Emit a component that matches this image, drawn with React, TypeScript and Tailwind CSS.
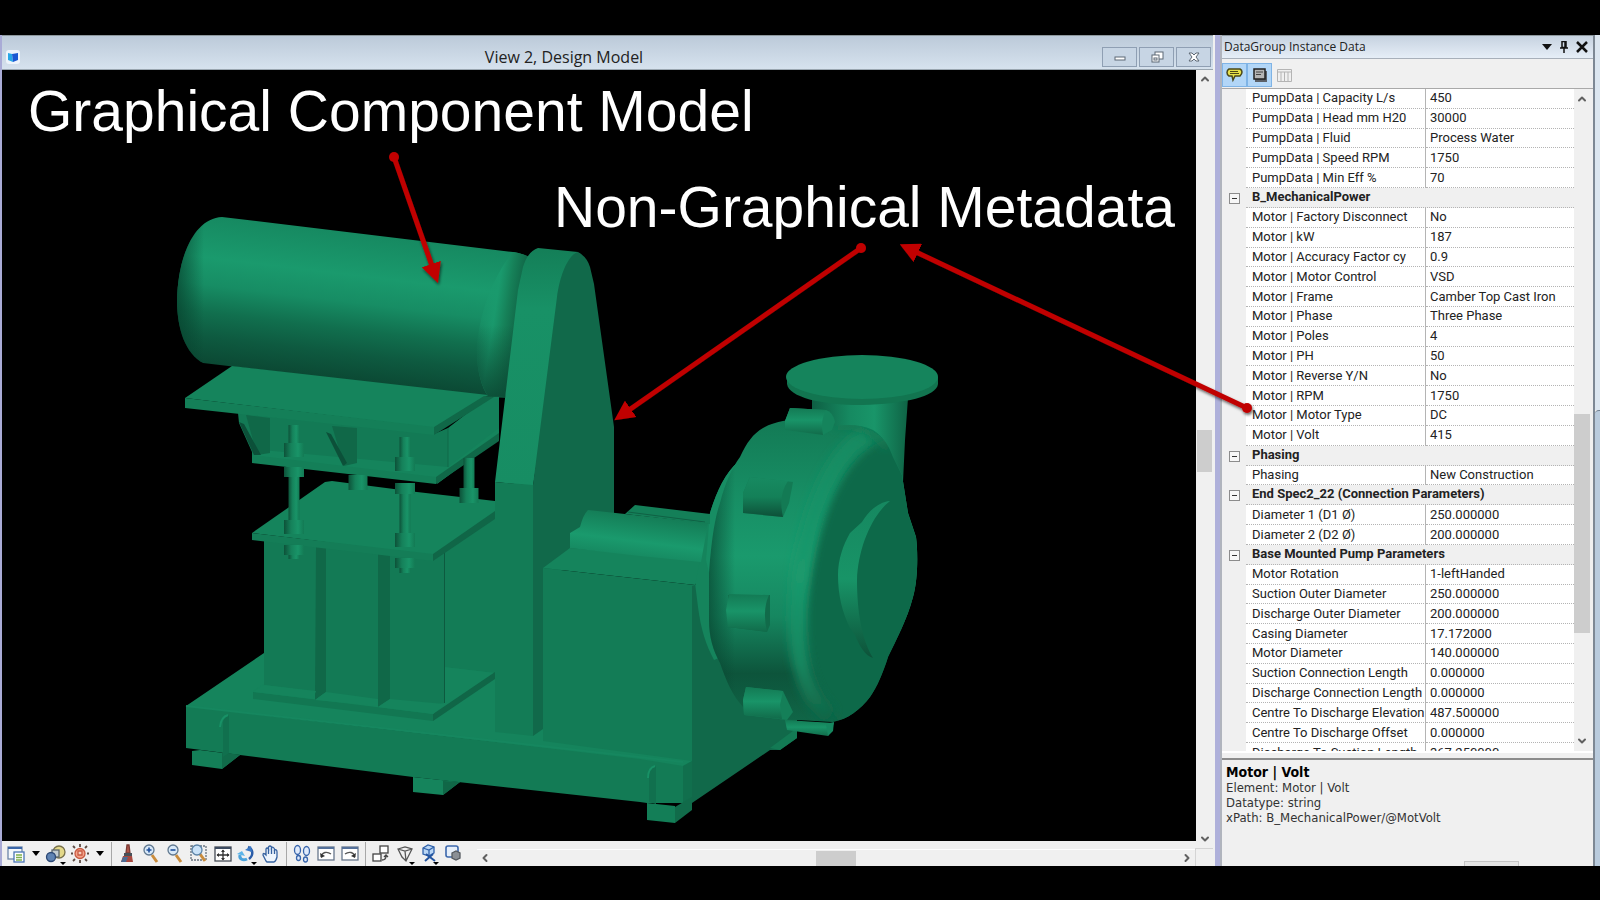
import type { ReactNode } from "react";
import { ChevronDown, ChevronLeft, ChevronRight, ChevronUp } from "lucide-react";

type Row = [string, string];
type Group = { title?: string; rows: Row[] };

const groups: Group[] = [
  {
    rows: [
      ["PumpData | Capacity L/s", "450"],
      ["PumpData | Head mm H20", "30000"],
      ["PumpData | Fluid", "Process Water"],
      ["PumpData | Speed RPM", "1750"],
      ["PumpData | Min Eff %", "70"],
    ],
  },
  {
    title: "B_MechanicalPower",
    rows: [
      ["Motor | Factory Disconnect", "No"],
      ["Motor | kW", "187"],
      ["Motor | Accuracy Factor cy", "0.9"],
      ["Motor | Motor Control", "VSD"],
      ["Motor | Frame", "Camber Top Cast Iron"],
      ["Motor | Phase", "Three Phase"],
      ["Motor | Poles", "4"],
      ["Motor | PH", "50"],
      ["Motor | Reverse Y/N", "No"],
      ["Motor | RPM", "1750"],
      ["Motor | Motor Type", "DC"],
      ["Motor | Volt", "415"],
    ],
  },
  { title: "Phasing", rows: [["Phasing", "New Construction"]] },
  {
    title: "End Spec2_22 (Connection Parameters)",
    rows: [
      ["Diameter 1 (D1 Ø)", "250.000000"],
      ["Diameter 2 (D2 Ø)", "200.000000"],
    ],
  },
  {
    title: "Base Mounted Pump Parameters",
    rows: [
      ["Motor Rotation", "1-leftHanded"],
      ["Suction Outer Diameter", "250.000000"],
      ["Discharge Outer Diameter", "200.000000"],
      ["Casing Diameter", "17.172000"],
      ["Motor Diameter", "140.000000"],
      ["Suction Connection Length", "0.000000"],
      ["Discharge Connection Length", "0.000000"],
      ["Centre To Discharge Elevation", "487.500000"],
      ["Centre To Discharge Offset", "0.000000"],
      ["Discharge To Suction Length", "367.250000"],
    ],
  },
];

function Rod({ x, top, bottom, w = 11 }: { x: number; top: number; bottom: number; w?: number }) {
  return <rect x={x - w / 2} y={top} width={w} height={bottom - top} fill="url(#rod)" />;
}

function PumpModel() {
  return (
    <g>
      <defs>
        <linearGradient id="drum" gradientUnits="userSpaceOnUse" x1="358" y1="230" x2="340" y2="380">
          <stop offset="0" stopColor="#168860" />
          <stop offset=".3" stopColor="#1a9a6d" />
          <stop offset=".48" stopColor="#178d64" />
          <stop offset=".66" stopColor="#116f4e" />
          <stop offset=".82" stopColor="#0e5a40" />
          <stop offset="1" stopColor="#0b4833" />
        </linearGradient>
        <linearGradient id="drumLeft" gradientUnits="userSpaceOnUse" x1="177" y1="0" x2="204" y2="0">
          <stop offset="0" stopColor="#06402c" stopOpacity=".7" />
          <stop offset="1" stopColor="#06402c" stopOpacity="0" />
        </linearGradient>
        <linearGradient id="drumCap" gradientUnits="userSpaceOnUse" x1="474" y1="310" x2="520" y2="317">
          <stop offset="0" stopColor="#1a9a6d" stopOpacity="0" />
          <stop offset=".45" stopColor="#1a9a6d" stopOpacity=".9" />
          <stop offset=".7" stopColor="#168058" />
          <stop offset="1" stopColor="#106345" />
        </linearGradient>
        <linearGradient id="drumCapShade" gradientUnits="userSpaceOnUse" x1="0" y1="325" x2="0" y2="396">
          <stop offset="0" stopColor="#0b4833" stopOpacity="0" />
          <stop offset="1" stopColor="#0b4833" stopOpacity=".85" />
        </linearGradient>
        <linearGradient id="rod" x1="0" x2="1" y1="0" y2="0">
          <stop offset="0" stopColor="#0d5239" />
          <stop offset=".35" stopColor="#15815a" />
          <stop offset=".7" stopColor="#199468" />
          <stop offset="1" stopColor="#137a54" />
        </linearGradient>
        <linearGradient id="neck" x1="0" x2="1" y1="0" y2="0">
          <stop offset="0" stopColor="#0e5f43" />
          <stop offset=".4" stopColor="#168a61" />
          <stop offset=".65" stopColor="#199569" />
          <stop offset="1" stopColor="#0f6345" />
        </linearGradient>
        <linearGradient id="shaft" gradientUnits="userSpaceOnUse" x1="640" y1="510" x2="634" y2="558">
          <stop offset="0" stopColor="#137752" />
          <stop offset=".65" stopColor="#1a9a6d" />
          <stop offset="1" stopColor="#168860" />
        </linearGradient>
        <linearGradient id="volute" gradientUnits="userSpaceOnUse" x1="0" y1="420" x2="0" y2="722">
          <stop offset="0" stopColor="#137a55" />
          <stop offset=".25" stopColor="#178e64" />
          <stop offset=".45" stopColor="#1a9a6d" />
          <stop offset=".65" stopColor="#168760" />
          <stop offset=".84" stopColor="#0d543b" />
          <stop offset="1" stopColor="#106647" />
        </linearGradient>
        <linearGradient id="voluteEdge" gradientUnits="userSpaceOnUse" x1="708" y1="0" x2="735" y2="0">
          <stop offset="0" stopColor="#07422e" stopOpacity=".7" />
          <stop offset="1" stopColor="#07422e" stopOpacity="0" />
        </linearGradient>
        <linearGradient id="rim" gradientUnits="userSpaceOnUse" x1="0" y1="430" x2="0" y2="720">
          <stop offset="0" stopColor="#178a61" />
          <stop offset=".5" stopColor="#1a9a6d" />
          <stop offset=".8" stopColor="#168760" />
          <stop offset="1" stopColor="#106647" />
        </linearGradient>
        <linearGradient id="lug" x1="0" x2="0" y1="0" y2="1">
          <stop offset="0" stopColor="#137a54" />
          <stop offset=".45" stopColor="#199468" />
          <stop offset="1" stopColor="#116b4a" />
        </linearGradient>
        <linearGradient id="lugDark" x1="0" x2="0" y1="0" y2="1">
          <stop offset="0" stopColor="#178a61" />
          <stop offset=".5" stopColor="#148058" />
          <stop offset="1" stopColor="#0d5038" />
        </linearGradient>
        <linearGradient id="hub" gradientUnits="userSpaceOnUse" x1="0" y1="500" x2="0" y2="658">
          <stop offset="0" stopColor="#168860" />
          <stop offset=".5" stopColor="#189467" />
          <stop offset="1" stopColor="#0d5239" />
        </linearGradient>
        <linearGradient id="guard" gradientUnits="userSpaceOnUse" x1="0" y1="250" x2="0" y2="485">
          <stop offset="0" stopColor="#147f58" />
          <stop offset=".25" stopColor="#189166" />
          <stop offset="1" stopColor="#178d63" />
        </linearGradient>
        <filter id="soft" x="-20%" y="-20%" width="140%" height="140%">
          <feGaussianBlur stdDeviation="4" />
        </filter>
        <clipPath id="voluteClip">
          <path d="M783 421C800 416 820 424 835 426C850 424 862 425 873 430C883 436 889 446 893 457L902 475L908 513L916 537C918 552 918 580 913 597C907 620 896 640 888 657C883 673 877 687 870 697C860 710 848 719 833 722L797 720C777 719 757 718 743 707C732 695 726 680 720 663C713 650 709 637 709 620L709 573C711 545 714 520 720 503C725 483 732 468 740 457C747 442 753 434 763 428C770 424 777 422 783 421Z" />
        </clipPath>
      </defs>

      {/* skid base */}
      <path d="M186 706L264 653H495L797 735L692 770L640 760Z" fill="#15845c" />
      <path d="M186 706L640 759L683 766L692 761V803L647 803L640 802L413 777L240 755L186 748Z" fill="#137b55" />
      <path d="M186 706L683 762" stroke="#16875f" strokeWidth="2" />
      <path d="M192 751L200 750L240 755L222 769L192 765Z" fill="#147f58" />
      <path d="M222 752L240 755L222 769Z" fill="#116b4a" />
      <path d="M223 724Q223 717 229 715V753L223 757Z" fill="#11704e" />
      <path d="M220 727Q221 717 228 715" stroke="#189166" strokeWidth="2" fill="none" />
      <path d="M413 777L460 782L443 795L413 792Z" fill="#15845c" />
      <path d="M443 781L460 782L443 795Z" fill="#106747" />

      {/* right-hand side wall */}
      <path d="M692 585H700L797 700V738L780 750H770L692 803Z" fill="#11694a" />
      <path d="M770 748L797 728V738L780 750Z" fill="#137a54" />
      <path d="M683 766L692 761V802L683 807Z" fill="#116f4d" />
      <path d="M647 803L675 806L675 823L647 820Z" fill="#137e57" />
      <path d="M675 807L692 797V810L675 823Z" fill="#116b4a" />
      <path d="M649 775Q649 768 656 766V804L649 802Z" fill="#11704e" />
      <path d="M648 778Q648 768 655 766" stroke="#189166" strokeWidth="2" fill="none" />

      {/* pedestal */}
      <path d="M444 540L495 510V673L444 667Z" fill="#137c56" />
      <path d="M253 691L264 684L444 667L495 673L433 715Z" fill="#15845c" />
      <path d="M253 692L433 714V721L253 699Z" fill="#127752" />
      <path d="M433 714L495 672V679L433 721Z" fill="#106647" />
      <path d="M264 538L444 548V703L428 706L264 685Z" fill="#137a55" />
      <path d="M316 546H326V692L315 700Z" fill="#106848" />
      <path d="M378 553H390V699L378 707Z" fill="#106848" />
      <path d="M326 692L378 699V706L315 700Z" fill="#15845c" />
      <path d="M390 699L444 704L433 714L378 707Z" fill="#15845c" />
      <path d="M264 685L316 691L313 699L253 692Z" fill="#15845c" />
      <path d="M444.500 550V703" stroke="#0d5a3f" strokeWidth="1" />
      <path d="M252 533L325 482L332 481L417 492L495 501V512L433 555Z" fill="#15845c" />
      <path d="M252 533L433 554V561L252 540Z" fill="#147d57" />
      <path d="M433 554L495 511V519L433 561Z" fill="#106647" />

      {/* drum */}
      <g>
        <path d="M222 217L513 252Q525 254 530 258L505 398L488 397L203 363C186 354 177 330 177 300C178 255 195 218 222 217Z" fill="url(#drum)" />
        <path d="M222 217L230 218L215 364L203 363C186 354 177 330 177 300C178 255 195 218 222 217Z" fill="url(#drumLeft)" />
        <path d="M513 252C494 275 480 310 477 345C476 370 482 388 488 396L505 397L530 258Q525 254 513 252Z" fill="url(#drumCap)" />
        <path d="M513 252C494 275 480 310 477 345C476 370 482 388 488 396L505 397L530 258Q525 254 513 252Z" fill="url(#drumCapShade)" />
      </g>

      {/* support frame below the drum */}
      <path d="M448 428L488 397L499 397V438L437 484Z" fill="#14805a" />
      <path d="M238 413L434 434L448 428V468L252 456V452L239 423Z" fill="#137a55" />
      <path d="M252 456L262 450L448 467L499 428V436L436 478Z" fill="#15845c" />
      <path d="M448 428V467" stroke="#106848" strokeWidth="1" />
      <path d="M252 455L436 477V484L252 463Z" fill="#147f58" />
      <path d="M436 477L499 433V441L436 484Z" fill="#106848" />
      <path d="M246 415L270 418V453L257 455Z" fill="#106848" />
      <path d="M239 422L244 424L261 455H254Z" fill="#0c5039" />
      <path d="M332 426L357 428V463L344 466Z" fill="#106848" />
      <path d="M326 432L331 434L347 463L343 466Z" fill="#0c5039" />
      <path d="M185 398L232 366L488 395L434 428Z" fill="#15845c" />
      <path d="M185 398L434 427V435L185 408Z" fill="#147f58" />
      <path d="M434 427L484 396L494 397L434 435Z" fill="#106848" />

      {/* threaded rods and nuts */}
      <Rod x={294} top={425} bottom={445} />
      <Rod x={294} top={443} bottom={457} w={20} />
      <Rod x={294} top={467} bottom={477} w={20} />
      <Rod x={294} top={477} bottom={521} />
      <Rod x={294} top={520} bottom={534} w={20} />
      <Rod x={294} top={545} bottom={555} w={20} />
      <Rod x={294} top={555} bottom={559} />
      <Rod x={405} top={437} bottom={458} />
      <Rod x={405} top={457} bottom={471} w={20} />
      <Rod x={405} top={483} bottom={494} w={20} />
      <Rod x={405} top={494} bottom={534} />
      <Rod x={405} top={533} bottom={547} w={20} />
      <Rod x={405} top={558} bottom={568} w={20} />
      <Rod x={405} top={568} bottom={573} />
      <Rod x={358} top={475} bottom={490} w={19} />
      <Rod x={469} top={458} bottom={488} />
      <Rod x={469} top={488} bottom={503} w={19} />

      {/* belt guard */}
      <path d="M495 482L518 290L523 267Q528 251 538 248L578 252L562 300L533 486Z" fill="url(#guard)" />
      <path d="M495 482L533 485V736L495 732Z" fill="#137c56" />
      <path d="M578 252Q587 257 590 267L594 284L614 427V570H543V729L533 736V485L557 297C560 275 568 255 578 252Z" fill="#11694a" />

      {/* pump back plate */}
      <path d="M738 462C725 473 716 493 710 513L700 550L694 575L698 607C701 630 706 645 714 660L740 650V462Z" fill="#15845c" />
      <path d="M738 462C725 473 716 493 710 513L706 560L709 573L722 503Z" fill="#178d63" />

      {/* bearing block and shaft */}
      <path d="M543 568L570 548L700 560L695 585Z" fill="#15845c" />
      <path d="M543 568L695 585L692 586V761L543 741Z" fill="#137c56" />
      <path d="M625 514L635 505L710 514V524Z" fill="#147f58" />
      <path d="M628 512L705 522" stroke="#0f6144" strokeWidth="1" />
      <path d="M588 510L708 523L701 562L640 556L570 548V533L580 527Q583 515 588 510Z" fill="url(#shaft)" />

      {/* discharge neck and flange */}
      <path d="M812 398H908L905 440L903 482L880 470L812 430Z" fill="url(#neck)" />
      <path d="M787 377V384C789 397 820 405 862 405C905 404 937 396 938 384V377Z" fill="#127550" />
      <ellipse cx="862" cy="377" rx="76" ry="22" fill="#15845c" />

      {/* pump casing */}
      <g clipPath="url(#voluteClip)">
        <rect x="700" y="410" width="225" height="320" fill="url(#volute)" />
        <rect x="700" y="410" width="40" height="320" fill="url(#voluteEdge)" />
        <path d="M885 440C840 455 812 530 806 610C804 665 822 705 848 730L940 740V430Z" fill="#11694a" filter="url(#soft)" />
        <path d="M868 436C830 450 801 530 797 610C795 665 809 700 830 716" stroke="url(#rim)" strokeWidth="17" fill="none" filter="url(#soft)" />
        <path d="M835 427C855 424 875 432 888 450" stroke="#137b55" strokeWidth="4" fill="none" filter="url(#soft)" />
      </g>
      <path d="M890 501C878 502 868 512 862 522L850 533C843 545 838 560 838 575C838 595 842 612 850 628L855 635C859 645 865 656 873 658C862 640 857 612 857 580C858 548 872 515 890 501Z" fill="url(#hub)" />

      {/* casing lugs */}
      <path d="M785 430V421L790 408L826 410Q833 412 835 422L832 430L823 435Z" fill="#15845c" />
      <path d="M785 430V421L790 408L826 410Q820 420 823 435Z" fill="url(#lug)" />
      <path d="M743 513V493L750 477L793 482L789 503L783 517Z" fill="#137a54" />
      <path d="M743 513V493L750 477L788 481Q778 495 783 517Z" fill="url(#lugDark)" />
      <path d="M728 627V595L770 595V625L767 632Z" fill="#116b4a" />
      <path d="M728 627L726 610L729 594L769 595Q762 610 767 632Z" fill="url(#lug)" />
      <path d="M744 715L743 700L746 687L783 691L793 712L787 720Z" fill="#147f58" />
      <path d="M744 715L743 700L746 687L783 691L780 705L782 719Z" fill="url(#lug)" />
      <path d="M785 720L834 723L828 736L787 730Z" fill="url(#lug)" />
      <path d="M826 724L834 722L833 731L828 736Z" fill="#168860" />
    </g>
  );
}

const ink = "#c00000";

function Callouts() {
  return (
    <g stroke={ink} strokeWidth="5" fill={ink} filter="url(#calloutShadow)">
      <defs>
        <filter id="calloutShadow" filterUnits="userSpaceOnUse" x="300" y="100" width="1000" height="400">
          <feDropShadow dx="1" dy="2" stdDeviation="1.500" floodColor="#000" floodOpacity=".6" />
        </filter>
        <marker id="head" markerUnits="userSpaceOnUse" markerWidth="20" markerHeight="20" refX="2" refY="10" orient="auto">
          <path d="M0 0L20 10L0 20Z" fill={ink} stroke="none" />
        </marker>
      </defs>
      <path d="M394 157L432 266" markerEnd="url(#head)" />
      <path d="M861 248L629 410" markerEnd="url(#head)" />
      <path d="M1247 408L916 252" markerEnd="url(#head)" />
      <circle cx="394" cy="157" r="5" stroke="none" />
      <circle cx="861" cy="248" r="5" stroke="none" />
      <circle cx="1247" cy="408" r="5" stroke="none" />
    </g>
  );
}

function WindowButton({ label, children }: { label: string; children: ReactNode }) {
  return (
    <button aria-label={label} className="flex h-5 w-[35px] items-center justify-center border border-[#8f9fb3] bg-[#c7d5e4]">
      <svg width="14" height="12" viewBox="0 0 14 12" fill="none" stroke="#5d6874" strokeWidth="1">
        {children}
      </svg>
    </button>
  );
}

function Tool({ label, menu, children }: { label: string; menu?: boolean; children: ReactNode }) {
  return (
    <button aria-label={label} className="flex h-6 w-6 shrink-0 items-center justify-center">
      <svg width="22" height="24" viewBox="0 0 22 24" fill="none" strokeWidth="1.300">
        {children}
        {menu && <path d="M15 20H21L18 23Z" fill="#000" />}
      </svg>
    </button>
  );
}

function Caret({ label }: { label: string }) {
  return (
    <button aria-label={label} className="flex h-6 w-4 shrink-0 items-center justify-center">
      <svg width="8" height="5" viewBox="0 0 8 5">
        <path d="M0 0H8L4 5Z" fill="#000" />
      </svg>
    </button>
  );
}

function Divider() {
  return <span className="mx-[3px] h-6 w-px shrink-0 bg-[#a8a8a8]" />;
}

function ViewToolbar() {
  return (
    <div className="flex shrink-0 items-center pl-[2px]">
      <Tool label="View attributes">
        <rect x="3" y="5" width="14" height="12" fill="#f4f8fc" stroke="#6d86a8" />
        <path d="M3 6H17" stroke="#3a66a8" strokeWidth="2" />
        <rect x="9" y="10" width="10" height="10" fill="#fff" stroke="#4a76b4" />
        <path d="M11 13H17M11 15.500H17M11 18H17" stroke="#7db04a" />
      </Tool>
      <Caret label="View attributes menu" />
      <Tool label="Display style" menu>
        <circle cx="14" cy="10" r="6" fill="#e3d889" stroke="#77704a" />
        <rect x="7" y="8" width="7" height="7" fill="#c3ccd0" stroke="#59646b" />
        <circle cx="6" cy="15" r="4.500" fill="#5f83b3" stroke="#2c4875" />
      </Tool>
      <Tool label="Adjust brightness">
        <path d="M11 2V5M11 18V21M2 11.500H4M18 11.500H20M4 4L6 6M16 17L18 19M18 4L16 6M4 19L6 17" stroke="#5c4a42" strokeWidth="1.800" />
        <circle cx="11" cy="11.500" r="5" fill="#f5a58c" stroke="#c85a41" />
        <path d="M9 9H13V13H9Z" fill="#f9d0c0" stroke="#c85a41" />
      </Tool>
      <Caret label="Brightness menu" />
      <Divider />
      <Tool label="Update view">
        <path d="M11 3H13L14 11H10Z" fill="#b0554a" stroke="#7a3b35" />
        <path d="M8 11H16V14H8Z" fill="#484f57" />
        <path d="M7 14H16L17 20H5Z" fill="#a7483f" />
        <path d="M5 20L7 15H12L10 20Z" fill="#4d6b93" />
      </Tool>
      <Tool label="Zoom in">
        <path d="M12 13L17 20" stroke="#c98c3c" strokeWidth="3" />
        <circle cx="9" cy="8" r="5" fill="#d7e8f8" stroke="#60788f" />
        <path d="M6.500 8H11.500M9 5.500V10.500" stroke="#1f4f9c" strokeWidth="1.600" />
      </Tool>
      <Tool label="Zoom out">
        <path d="M12 13L17 20" stroke="#c98c3c" strokeWidth="3" />
        <circle cx="9" cy="8" r="5" fill="#d7e8f8" stroke="#60788f" />
        <path d="M6.500 8H11.500" stroke="#1f4f9c" strokeWidth="1.600" />
      </Tool>
      <Tool label="Window area">
        <rect x="3" y="4" width="15" height="14" stroke="#66717d" strokeDasharray="2 1" />
        <path d="M12 12L17 19" stroke="#c98c3c" strokeWidth="3" />
        <circle cx="9" cy="8" r="5" fill="#c9e2f8" stroke="#5b83a6" />
      </Tool>
      <Tool label="Fit view">
        <rect x="3" y="5" width="16" height="14" fill="#fff" stroke="#464c55" />
        <path d="M3 6H19" stroke="#3c4a60" strokeWidth="2" />
        <path d="M11 8V18M5 13H17" stroke="#333" />
        <path d="M9 10L11 7.500L13 10ZM9 16L11 18.500L13 16ZM7 11L4.500 13L7 15ZM15 11L17.500 13L15 15Z" fill="#333" />
      </Tool>
      <Tool label="Rotate view" menu>
        <path d="M4 13C3 17 7 19 11 17" stroke="#4aa3dc" strokeWidth="3" />
        <path d="M1 12L6 9L9 14Z" fill="#5db4e8" />
        <path d="M12 5C17 7 18 13 13 17" stroke="#2a5ca8" strokeWidth="2.500" />
        <path d="M15 4L9 8L16 10Z" fill="#3a78c4" />
      </Tool>
      <Tool label="Pan view">
        <path d="M6 19L3 13Q3 10 6 13V7Q7 5 8.500 7V5Q10 3 11.500 5V6Q13 4 14.500 7V8Q17 7 17 10V15Q16 19 14 20H7Z" fill="#eef5fd" stroke="#35619f" />
        <path d="M8.500 7V12M11.500 6V12M14.500 8V12" stroke="#35619f" />
      </Tool>
      <Divider />
      <Tool label="Walk">
        <ellipse cx="6.500" cy="8" rx="3" ry="4.500" fill="#dfeafb" stroke="#3764ab" />
        <ellipse cx="7.500" cy="16" rx="2" ry="2.500" fill="#dfeafb" stroke="#3764ab" />
        <ellipse cx="15.500" cy="9" rx="3" ry="4.500" fill="#dfeafb" stroke="#3764ab" />
        <ellipse cx="14.500" cy="17.500" rx="2" ry="2.500" fill="#dfeafb" stroke="#3764ab" />
      </Tool>
      <Tool label="View previous">
        <rect x="3" y="5" width="16" height="13" fill="#fff" stroke="#68778c" />
        <path d="M3 6H19" stroke="#55719a" strokeWidth="2" />
        <path d="M6 15C7 10 12 9 16 12" stroke="#555" />
        <path d="M5 11L6 16L10 14Z" fill="#333" />
      </Tool>
      <Tool label="View next">
        <rect x="3" y="5" width="16" height="13" fill="#fff" stroke="#68778c" />
        <path d="M3 6H19" stroke="#55719a" strokeWidth="2" />
        <path d="M16 15C15 10 10 9 6 12" stroke="#555" />
        <path d="M17 11L16 16L12 14Z" fill="#333" />
      </Tool>
      <Divider />
      <Tool label="Copy view">
        <rect x="10" y="4" width="8" height="7" fill="#fff" stroke="#444" />
        <rect x="3" y="12" width="8" height="7" fill="#fff" stroke="#444" />
        <path d="M12 18Q16 18 16 14M14 15L16 13L18 15" stroke="#444" />
      </Tool>
      <Tool label="View perspective" menu>
        <path d="M4 7L11 5L18 7L12 19L8 15ZM4 7L11 9L18 7M11 9L12 19" stroke="#555" />
      </Tool>
      <Tool label="Clip volume" menu>
        <path d="M5 6L10 3L16 5V11L11 14L5 12Z" fill="#b9d6f5" stroke="#2f61aa" />
        <path d="M5 6L11 8L16 5M11 8V14" stroke="#2f61aa" />
        <path d="M7 19L15 12M8 12L17 19" stroke="#2455a0" strokeWidth="2" />
      </Tool>
      <Tool label="Clip mask">
        <rect x="4" y="4" width="12" height="11" rx="2" fill="#e6effa" stroke="#3b67ac" strokeWidth="1.600" />
        <path d="M10 11L14 9L18 11V16L14 18L10 16Z" fill="#8a8f95" stroke="#555a60" />
      </Tool>
    </div>
  );
}

function ModelWindow() {
  return (
    <section className="flex min-w-0 flex-1 flex-col border-l-2 border-[#a9abd6]">
      <header className="flex h-[35px] items-center border-t border-b border-t-[#8d979c] border-b-[#9aa6b0] bg-linear-to-b from-[#bccad9] to-[#d6e2ee] pt-2 pr-[2px] pl-1">
        <svg width="14" height="14" viewBox="0 0 14 14">
          <rect width="14" height="14" rx="3" fill="#eef4fb" />
          <path d="M2 3L6 4L7 12L2 10Z" fill="#27a7e6" />
          <path d="M6 4L12 3V10L7 12Z" fill="#1b58d2" />
        </svg>
        <h1 className="flex-1 pl-1.5 text-center text-base leading-5 text-[#222]">View 2, Design Model</h1>
        <div className="flex gap-[2px]">
          <WindowButton label="Minimize">
            <rect x="2" y="6" width="10" height="3" fill="#fff" />
          </WindowButton>
          <WindowButton label="Restore">
            <rect x="5" y="1" width="8" height="7" fill="#fff" />
            <rect x="2" y="4" width="7" height="7" fill="#fff" />
            <rect x="4" y="7" width="3" height="2" />
          </WindowButton>
          <WindowButton label="Close">
            <path d="M3 2H5L7 4L9 2H12L9 6L12 10H9L7 8L5 10H2L5 6L2 2Z" fill="#fff" />
          </WindowButton>
        </div>
      </header>
      <div className="flex min-h-0 flex-1">
        <div className="relative min-w-0 flex-1 bg-black">
          <svg className="pointer-events-none absolute top-0 left-0 z-10 overflow-visible" width="1194" height="771" viewBox="2 70 1194 771" fill="none">
            <PumpModel />
            <Callouts />
          </svg>
          <p className="absolute top-3 left-[26px] z-20 font-['Liberation_Sans',sans-serif] text-[57px] leading-[58px] whitespace-nowrap text-white">
            Graphical Component Model
          </p>
          <p className="absolute top-[108px] left-[552px] z-20 font-['Liberation_Sans',sans-serif] text-[57px] leading-[58px] whitespace-nowrap text-white">
            Non-Graphical Metadata
          </p>
        </div>
        <div className="-mb-[7px] flex w-[17px] flex-col items-center bg-[#f0f0f0]">
          <button aria-label="Scroll up" className="flex h-[18px] w-full items-center justify-center">
            <ChevronUp size={12} strokeWidth={4} color="#606060" />
          </button>
          <div className="flex-[342]" />
          <div className="h-[42px] w-[15px] bg-[#cdcdcd]" />
          <div className="flex-[358]" />
          <button aria-label="Scroll down" className="relative flex h-[18px] w-full items-center justify-center">
            <ChevronDown size={12} strokeWidth={4} color="#606060" />
          </button>
        </div>
      </div>
      <footer className="flex h-[25px] bg-[#f0f0f0]">
        <ViewToolbar />
        <div className="mt-2 ml-3 flex min-w-0 flex-1 items-center border-t border-white">
          <button aria-label="Scroll left" className="flex h-4 w-4 items-center justify-center">
            <ChevronLeft size={12} strokeWidth={4} color="#606060" />
          </button>
          <div className="flex-[322]" />
          <div className="h-[15px] w-10 bg-[#cdcdcd]" />
          <div className="flex-[323]" />
          <button aria-label="Scroll right" className="flex h-4 w-4 items-center justify-center">
            <ChevronRight size={12} strokeWidth={4} color="#606060" />
          </button>
        </div>
        <div className="mt-[7px] w-[18px] border-t border-l border-[#d4d4d4]" />
      </footer>
    </section>
  );
}

function DataTable() {
  return (
    <table className="h-[674px] w-full table-fixed border-separate border-spacing-0 font-['Roboto',sans-serif] text-[13px] leading-[18px] text-[#222]">
      <colgroup>
        <col className="w-6" />
        <col className="w-[180px]" />
        <col />
      </colgroup>
      {groups.map((group, i) => (
        <tbody key={i}>
          {group.title && (
            <tr className="bg-[#f0f0f0]">
              <td className="p-0 text-center align-bottom">
                <button
                  aria-label={`Collapse ${group.title}`}
                  className="mb-1 inline-flex h-[11px] w-[11px] items-center justify-center border border-[#8c8c8c] bg-[#f7f7f7] align-bottom"
                >
                  <span className="h-px w-[5px] bg-[#333]" />
                </button>
              </td>
              <th colSpan={2} className="border-b border-dotted border-[#b4b4b4] p-0 pl-1.5 text-left align-top font-bold whitespace-nowrap">
                {group.title}
              </th>
            </tr>
          )}
          {group.rows.map(([name, value]) => (
            <tr key={name} className="bg-white">
              <td className="bg-[#f0f0f0] p-0" />
              <td className="border-r border-b border-r-[#b4b4b4] border-b-[#b4b4b4] p-0 pl-1.5 whitespace-nowrap [border-bottom-style:dotted]">
                {name}
              </td>
              <td className="border-b border-dotted border-[#b4b4b4] p-0 pl-1 whitespace-nowrap">{value}</td>
            </tr>
          ))}
        </tbody>
      ))}
    </table>
  );
}

function DataPanel() {
  return (
    <aside className="flex w-[373px] shrink-0 flex-col border-l-2 border-[#b0b4bd] bg-[#f0f0f0]">
      <header className="flex h-6 items-center border-t border-b border-t-[#8d979c] border-b-[#a8b0ba] bg-linear-to-b from-[#c6d2e0] to-[#e6eef7] pr-[5px] pl-[2px]">
        <h2 className="flex-1 text-xs leading-5 text-[#222]">DataGroup Instance Data</h2>
        <div className="flex items-center gap-2">
          <button aria-label="Panel menu">
            <svg width="10" height="6" viewBox="0 0 10 6"><path d="M0 0H10L5 6Z" fill="#111" /></svg>
          </button>
          <button aria-label="Pin panel">
            <svg width="8" height="12" viewBox="0 0 8 12" fill="none" stroke="#111">
              <path d="M2 .5H6V6.500H2ZM5 1V6M0 7H8M4 7V12" strokeWidth="1.500" />
            </svg>
          </button>
          <button aria-label="Close panel">
            <svg width="12" height="12" viewBox="0 0 12 12" fill="none" stroke="#111" strokeWidth="2.500">
              <path d="M1 1L11 11M11 1L1 11" />
            </svg>
          </button>
        </div>
      </header>
      <div className="flex h-[30px] items-end border-b border-[#a9a9a9]">
        <button aria-label="Show description" className="mb-px flex h-6 w-[25px] items-center justify-center border border-[#7fb4e6] bg-[#b2d6f7]">
          <svg width="18" height="16" viewBox="0 0 18 16" fill="none" stroke="#4a4718">
            <path d="M3 2H14Q16 3 16 5T14 9H9L7 13L6 9H3Q1 8 1 5.500T3 2Z" fill="#e5e04a" strokeWidth="1.500" />
            <path d="M4 4.500H12M4 6.500H13" />
          </svg>
        </button>
        <button aria-label="Show title bar" className="mb-px flex h-6 w-[25px] items-center justify-center border border-[#7fb4e6] bg-[#b2d6f7]">
          <svg width="16" height="16" viewBox="0 0 16 16" fill="none">
            <path d="M3 4H15V15H3Z" fill="#5b6068" />
            <path d="M2 2H13V12H2Z" fill="#b5b5b5" stroke="#222" strokeWidth="1.500" />
            <path d="M4 5H11M4 7.500H9" stroke="#444" />
          </svg>
        </button>
        <button aria-label="Show columns" className="mb-px flex h-6 w-6 items-center justify-center">
          <svg width="15" height="13" viewBox="0 0 15 13" fill="none" stroke="#b4b4b4">
            <path d="M.5 .5H14.500V12.500H.5ZM.5 3H14.500M4 3V12M7.500 3V12M11 3V12" />
          </svg>
        </button>
      </div>
      <div className="flex min-h-0 flex-1 overflow-hidden">
        <div className="min-w-0 flex-1 overflow-hidden">
          <DataTable />
        </div>
        <div className="mr-[3px] flex w-4 flex-col items-center bg-[#f0f0f0]">
          <button aria-label="Scroll up" className="flex h-[20px] w-full items-center justify-center">
            <ChevronUp size={12} strokeWidth={4} color="#606060" />
          </button>
          <div className="flex-[305]" />
          <div className="h-[219px] w-4 bg-[#cdcdcd]" />
          <div className="flex-[98]" />
          <button aria-label="Scroll down" className="flex h-[20px] w-full items-center justify-center">
            <ChevronDown size={12} strokeWidth={4} color="#606060" />
          </button>
        </div>
      </div>
      <div className="h-[7px] border-t-2 border-white" />
      <div className="flex h-[108px] flex-col border-t-2 border-[#8c8c8c] pt-1 pl-1 font-['DejaVu_Sans_Condensed','DejaVu_Sans',sans-serif] text-[13px] leading-[15px] text-[#333]">
        <h3 className="text-sm leading-4 font-bold text-black">Motor | Volt</h3>
        <p>Element: Motor | Volt</p>
        <p>Datatype: string</p>
        <p>xPath: B_MechanicalPower/@MotVolt</p>
        <div className="mt-auto mr-[74px] h-[5px] w-[55px] self-end border border-b-0 border-[#c4c4c4] bg-[#e4e4e4]" />
      </div>
    </aside>
  );
}

export default function App() {
  return (
    <main className="flex h-screen flex-col overflow-hidden bg-black pt-[35px] pb-[34px] font-['Open_Sans','Noto_Sans',sans-serif]">
      <div className="flex min-h-0 flex-1 bg-[#f0f0f0]">
        <ModelWindow />
        <div className="ml-[2px] w-[5px] bg-[#aeb0da]" />
        <DataPanel />
        <div className="flex w-[7px] flex-col border-l-2 border-[#7d8894]">
          <div className="flex-[375] bg-[#dce6f0]" />
          <div className="flex-[456] rounded-tl border-t border-[#6f7f90] bg-[#b9cbdd]" />
        </div>
      </div>
    </main>
  );
}
